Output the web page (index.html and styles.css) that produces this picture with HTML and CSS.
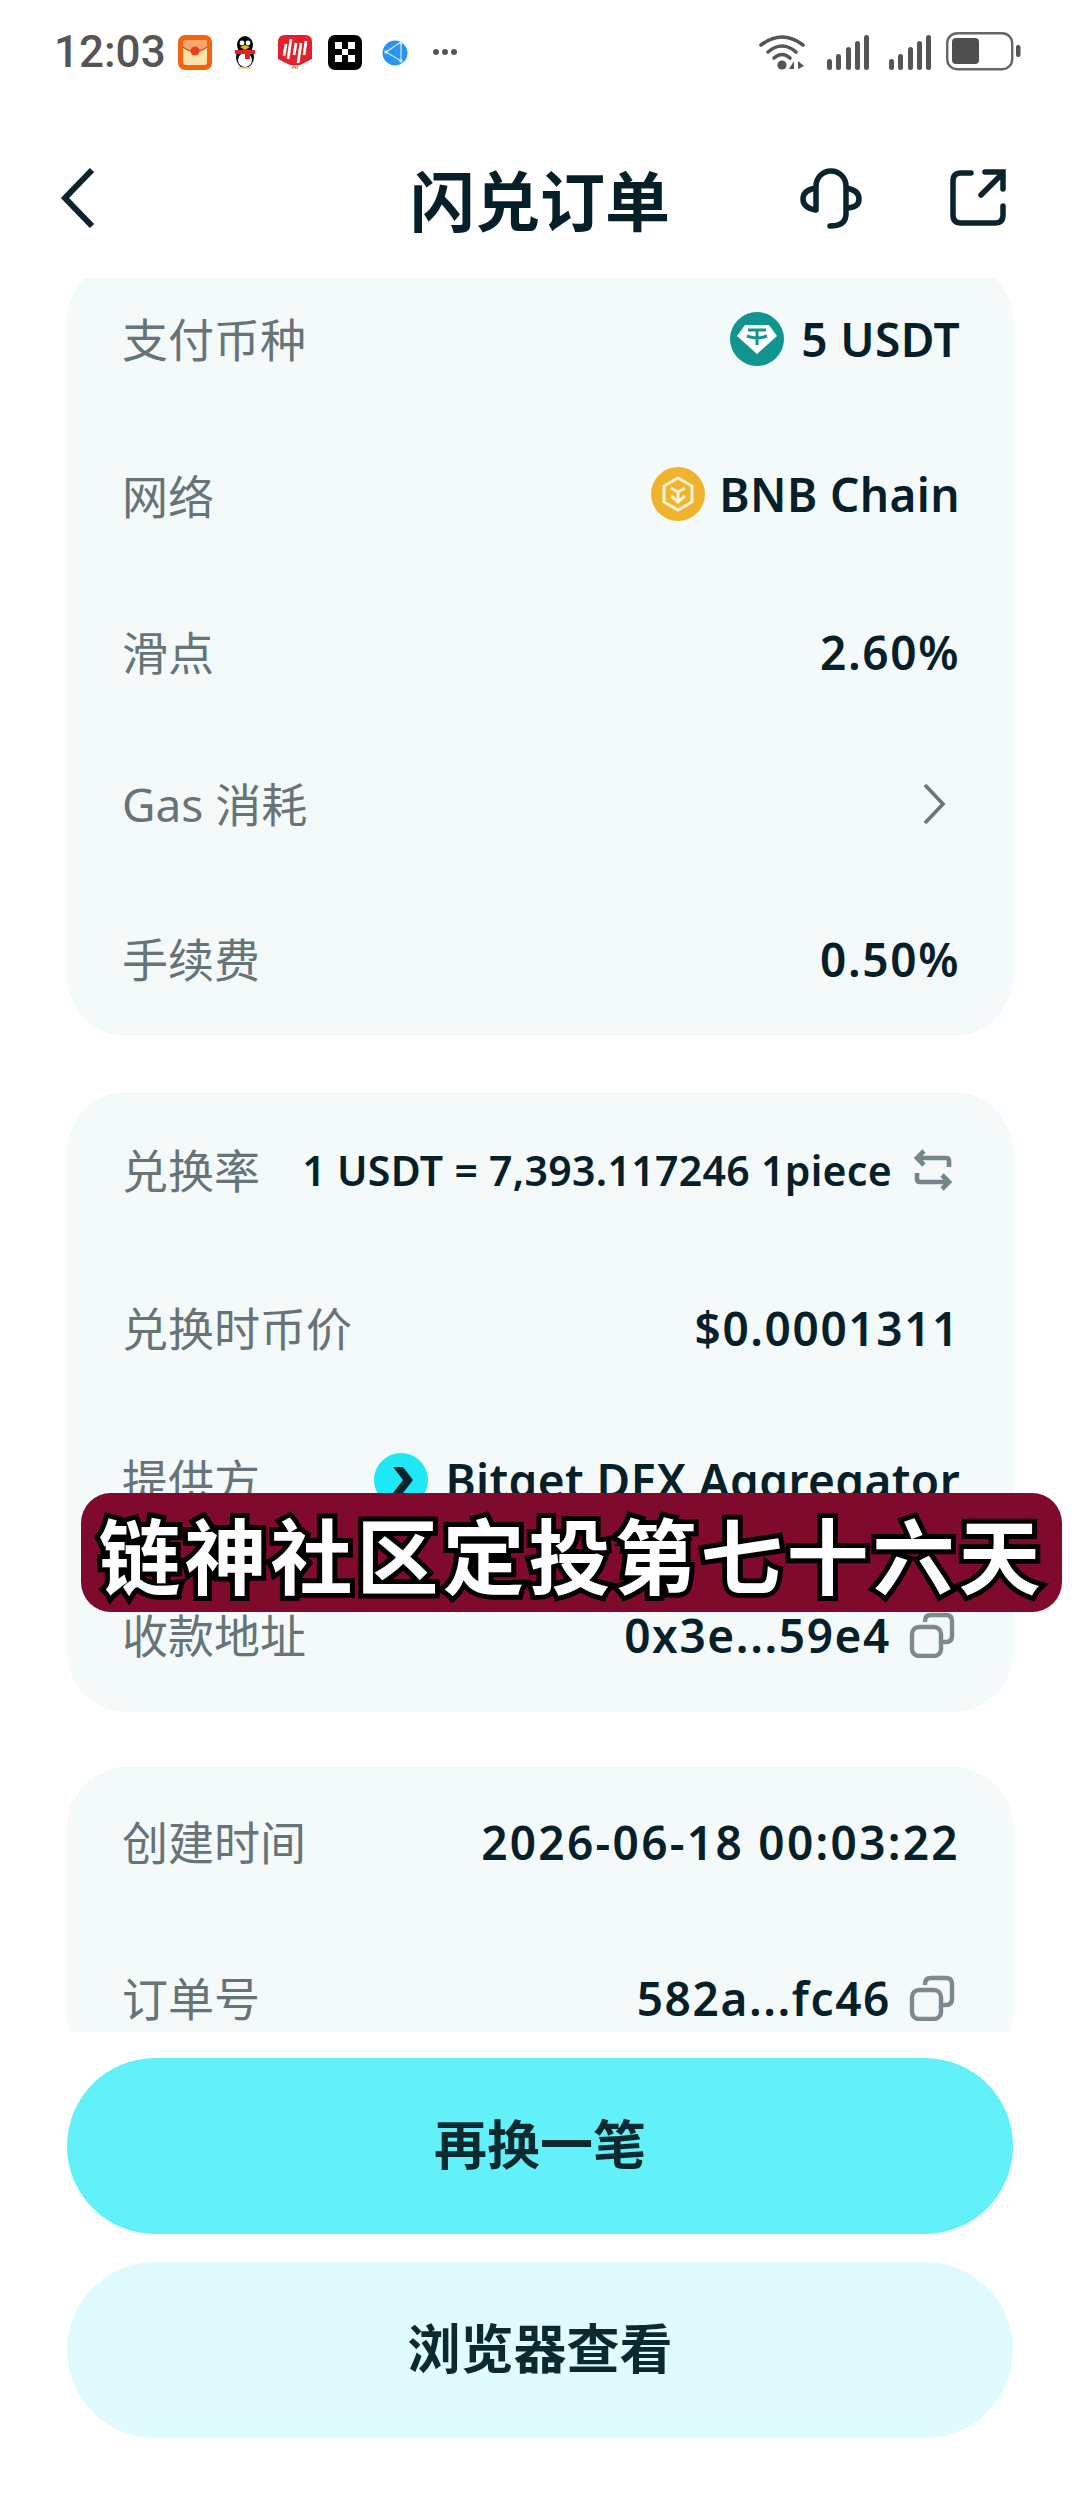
FILE: index.html
```html
<!DOCTYPE html>
<html>
<head>
  <meta charset="utf-8">
  <title>闪兑订单</title>
  <link rel="stylesheet" href="styles.css">
</head>
<body>
  <div class="page">
    <div class="status">
      <div class="status-left">
        <span class="time">12:03</span>
        <div class="notify">
          <svg viewBox="0 0 34 34"><rect width="34" height="35" rx="7" fill="#f2640f"/><rect x="5" y="5" width="24" height="25" rx="3" fill="#fde3a8"/><path d="M5 12Q17 21 29 12V8Q29 5 26 5H8Q5 5 5 8Z" fill="#f9a66a"/><path d="M5 12Q17 21 29 12" stroke="#d9481c" stroke-width="1.2" fill="none"/><circle cx="17" cy="16" r="4.5" fill="#e8401c"/></svg>
          <svg viewBox="0 0 34 34"><ellipse cx="17" cy="22" rx="9" ry="11" fill="#000"/><ellipse cx="17" cy="10" rx="8" ry="9" fill="#000"/><ellipse cx="17" cy="25" rx="7" ry="7" fill="#fff"/><circle cx="14" cy="8" r="2.4" fill="#fff"/><circle cx="20" cy="8" r="2.4" fill="#fff"/><path d="M12 12 17 10 22 12 17 15Z" fill="#f5b400"/><path d="M7 15H27V19H22V24H17V19H7Z" fill="#e2231a"/><path d="M10 33H24" stroke="#ecd77a" stroke-width="1.5"/></svg>
          <svg viewBox="0 0 34 34"><path d="M7 0H27Q34 0 34 7V24L22 30H12L0 24V7Q0 0 7 0Z" fill="#e5202b"/><path d="M8 9 6 21M13 4 10 24M18 8 16 20M23 8 20 28M28 6 26 20" stroke="#fff" stroke-width="2.8" fill="none"/><text x="17" y="34" class="ai">AI</text></svg>
          <svg viewBox="0 0 34 34"><rect width="34" height="35" rx="7" fill="#000"/><path d="M7 7H14V14H7ZM20 7H27V14H20ZM14 14H20V20H14ZM7 20H14V27H7ZM20 20H27V27H20Z" fill="#fff"/></svg>
          <svg viewBox="0 0 34 34"><circle cx="17" cy="18" r="12.5" fill="#2b95ee"/><path d="M23 7 8 17 23 26 23 7" stroke="#cfe9ff" stroke-width="1.2" fill="none"/><circle cx="8" cy="17" r="1.7" fill="#cfe9ff"/><circle cx="23" cy="26" r="1.7" fill="#cfe9ff"/><circle cx="23" cy="8" r="1.7" fill="#cfe9ff"/></svg>
          <svg viewBox="0 0 34 34"><circle cx="8" cy="17" r="3" fill="#555"/><circle cx="17" cy="17" r="3" fill="#555"/><circle cx="26" cy="17" r="3" fill="#555"/></svg>
        </div>
      </div>
      <div class="status-right">
        <svg class="ic-wifi" viewBox="0 0 46 38"><path d="M2 12Q23 -4 44 12" stroke="#555" stroke-width="3.6" fill="none" stroke-linecap="round"/><path d="M9 19Q23 7 37 19" stroke="#555" stroke-width="3.6" fill="none" stroke-linecap="round"/><path d="M15 25Q23 18 31 25" stroke="#555" stroke-width="3.6" fill="none" stroke-linecap="round"/><circle cx="23" cy="32" r="4.6" fill="#555"/><path d="M35 28V36H30ZM39 28V36L45 33Z" fill="#555"/></svg>
        <svg class="ic-signal" viewBox="0 0 44 36"><rect x="1" y="25" width="5" height="11" rx="2.5" fill="#555"/><rect x="10" y="20" width="5" height="16" rx="2.5" fill="#555"/><rect x="20" y="13" width="5" height="23" rx="2.5" fill="#555"/><rect x="29" y="7" width="5" height="29" rx="2.5" fill="#555"/><rect x="38" y="1" width="5" height="35" rx="2.5" fill="#555"/></svg>
        <svg class="ic-signal" viewBox="0 0 44 36"><rect x="1" y="25" width="5" height="11" rx="2.5" fill="#555"/><rect x="10" y="20" width="5" height="16" rx="2.5" fill="#555"/><rect x="20" y="13" width="5" height="23" rx="2.5" fill="#555"/><rect x="29" y="7" width="5" height="29" rx="2.5" fill="#555"/><rect x="38" y="1" width="5" height="35" rx="2.5" fill="#555"/></svg>
        <svg class="ic-batt" viewBox="0 0 76 40"><rect x="1.2" y="1.2" width="65" height="36" rx="10" stroke="#666" stroke-width="2.4" fill="none"/><rect x="6" y="6" width="27" height="26" rx="4" fill="#4f4f4f"/><rect x="70" y="13" width="4.5" height="12" rx="2" fill="#555"/></svg>
      </div>
    </div>

    <div class="header">
      <svg class="ic-back" viewBox="0 0 40 64"><path d="M35 4 8 32 35 60" stroke="#0a232c" stroke-width="6" fill="none"/></svg>
      <h1 class="title">闪兑订单</h1>
      <div class="header-right">
        <svg class="ic-head" viewBox="0 0 62 64"><path d="M16 44V20A15 15 0 0 1 46 20V48Q46 60 30 60" stroke="#0a232c" stroke-width="5.5" fill="none" stroke-linecap="round"/><path d="M16 22Q3 24 3 33T16 44" stroke="#0a232c" stroke-width="5.5" fill="none"/><path d="M46 22Q59 24 59 33T46 42" stroke="#0a232c" stroke-width="5.5" fill="none"/></svg>
        <svg class="ic-share" viewBox="0 0 60 60"><path d="M22 5H12Q4 5 4 13V47Q4 55 12 55H46Q54 55 54 47V38" stroke="#0a232c" stroke-width="5.5" fill="none" stroke-linecap="round"/><path d="M32 27 53 6M36 4H54V21" stroke="#0a232c" stroke-width="5.5" fill="none" stroke-linecap="round"/></svg>
      </div>
    </div>

    <div class="scroll">
      <div class="card">
        <div class="row">
          <span class="label">支付币种</span>
          <span class="value">
            <svg class="coin" viewBox="0 0 54 54"><circle cx="27" cy="27" r="27" fill="#109590"/><path d="M15 13H39L47 24 27 42 7 24Z" fill="#fff"/><path d="M18 18H36M27 18V33M17 24Q27 28 37 24" stroke="#109590" stroke-width="3" fill="none"/></svg>
            <span>5 USDT</span>
          </span>
        </div>
        <div class="row">
          <span class="label low">网络</span>
          <span class="value">
            <svg class="coin tight" viewBox="0 0 54 54"><circle cx="27" cy="27" r="27" fill="#f0b32e"/><path d="M27 11 41 19V35L27 43 13 35V19Z" stroke="#fff3d4" stroke-width="3" fill="none"/><path d="M20 21 27 25 34 21M27 25V33M20 29 27 35 34 29" stroke="#fff3d4" stroke-width="3" fill="none"/></svg>
            <span>BNB Chain</span>
          </span>
        </div>
        <div class="row nudge">
          <span class="label">滑点</span>
          <span class="value num">2.60%</span>
        </div>
        <div class="row">
          <span class="label">Gas 消耗</span>
          <svg class="ic-arrow" viewBox="0 0 26 44"><path d="M4 3 22 22 4 41" stroke="#67787c" stroke-width="3.6" fill="none"/></svg>
        </div>
        <div class="row">
          <span class="label">手续费</span>
          <span class="value num">0.50%</span>
        </div>
      </div>

      <div class="card">
        <div class="row">
          <span class="label">兑换率</span>
          <span class="value rate">
            <span>1 USDT = 7,393.117246 1piece</span>
            <svg class="ic-swap" viewBox="0 0 44 44"><path d="M38 19V13Q38 10 35 10H7M13 3 6 10 13 17" stroke="#75868a" stroke-width="4.6" fill="none"/><path d="M6 25V31Q6 34 9 34H37M31 27 38 34 31 41" stroke="#75868a" stroke-width="4.6" fill="none"/></svg>
          </span>
        </div>
        <div class="row nudge">
          <span class="label">兑换时币价</span>
          <span class="value num">$0.0001311</span>
        </div>
        <div class="row">
          <span class="label">提供方</span>
          <span class="value">
            <svg class="coin" viewBox="0 0 54 54"><circle cx="27" cy="27" r="27" fill="#1fe8f6"/><path d="M19 14H29L39 27 29 40H19L29 27Z" fill="#0a232c"/></svg>
            <span>Bitget DEX Aggregator</span>
          </span>
        </div>
        <div class="row">
          <span class="label">收款地址</span>
          <span class="value">
            <span class="num">0x3e...59e4</span>
            <svg class="ic-copy" viewBox="0 0 46 46"><rect x="3" y="15" width="29" height="29" rx="7" stroke="#7d8a8d" stroke-width="4.4" fill="none"/><path d="M16 10V9Q16 3 22 3H37Q43 3 43 9V24Q43 30 37 30H34" stroke="#7d8a8d" stroke-width="4.4" fill="none"/></svg>
          </span>
        </div>
      </div>

      <div class="card third">
        <div class="row">
          <span class="label">创建时间</span>
          <span class="value num wide">2026-06-18 00:03:22</span>
        </div>
        <div class="row">
          <span class="label">订单号</span>
          <span class="value">
            <span class="num">582a...fc46</span>
            <svg class="ic-copy" viewBox="0 0 46 46"><rect x="3" y="15" width="29" height="29" rx="7" stroke="#7d8a8d" stroke-width="4.4" fill="none"/><path d="M16 10V9Q16 3 22 3H37Q43 3 43 9V24Q43 30 37 30H34" stroke="#7d8a8d" stroke-width="4.4" fill="none"/></svg>
          </span>
        </div>
      </div>
    </div>

    <div class="footer">
      <button class="btn primary">再换一笔</button>
      <button class="btn light">浏览器查看</button>
    </div>

    <div class="caption">链神社区定投第七十六天</div>
  </div>
</body>
</html>
```

FILE: styles.css
```css
*{margin: 0;padding: 0;box-sizing: border-box;}
html, body{
  width: 1080px;
  height: 2504px;
  overflow: hidden;
  background-color: #ffffff;
  color: #06202a;
  font-family: "Noto Sans","Noto Sans CJK SC",sans-serif;
}
.page{
  position: relative;
  width: 1080px;
  height: 2504px;
  display: flex;
  flex-direction: column;
}
.status{
  height: 104px;
  padding: 0 58px 0 54px;
  display: flex;
  align-items: center;
  justify-content: space-between;
}
.status-left, .status-right{
  display: flex;
  align-items: center;
}
.time{
  font-family: Roboto,sans-serif;
  font-size: 44px;
  font-weight: 500;
  color: #555555;
  margin-right: 12px;
}
.notify{
  display: flex;
  gap: 16px;
}
.notify svg{
  width: 34px;
  height: 34px;
  overflow: visible;
}
.ai{
  font-family: Roboto,sans-serif;
  font-size: 7px;
  fill: #e5202b;
  text-anchor: middle;
}
.ic-wifi{width: 46px;height: 38px;margin-right: 21px;}
.ic-signal{width: 44px;height: 36px;margin-right: 18px;}
.ic-signal + .ic-batt{margin-left: -4px;}
.ic-batt{width: 76px;height: 40px;}

.header{
  height: 174px;
  padding: 14px 71px 0 57px;
  display: flex;
  align-items: center;
  justify-content: space-between;
  position: relative;
}
.ic-back{width: 40px;height: 64px;}
.title{
  position: absolute;
  left: 0;
  right: 0;
  text-align: center;
  font-size: 65px;
  font-weight: 700;
}
.header-right{
  display: flex;
  align-items: center;
  gap: 87px;
}
.ic-head{width: 62px;height: 64px;}
.ic-share{width: 60px;height: 60px;}

.scroll{
  height: 1754px;
  padding: 0 67px;
  overflow: hidden;
}
.card{
  margin-top: 56px;
  padding: 0 53px 0 55px;
  background-color: #f4f9fa;
  border-radius: 60px;
}
.card:first-child{
  margin-top: -17px;
}
.card.third{
  margin-top: 55px;
}
.third .row:first-child{
  height: 153px;
  padding-bottom: 4px;
}
.row{
  height: 155px;
  display: flex;
  align-items: center;
  justify-content: space-between;
}
.row.nudge{
  padding-top: 6px;
}
.label{
  padding-bottom: 4px;
  font-size: 46px;
  color: #667477;
}
.label.low{
  padding-bottom: 0;
}
.value{
  display: flex;
  align-items: center;
  font-size: 46px;
  font-weight: 600;
  letter-spacing: 0.4px;
  white-space: nowrap;
}
.num{
  letter-spacing: 1.6px;
}
.wide{
  letter-spacing: 2.3px;
}
.rate{
  font-size: 41px;
  letter-spacing: 0.3px;
}
.coin{
  width: 54px;
  height: 54px;
  margin-right: 17px;
}
.coin.tight{
  margin-right: 14px;
}
.ic-arrow{width: 26px;height: 44px;margin-right: 13px;}
.ic-swap{width: 44px;height: 44px;margin-left: 19px;margin-right: 5px;}
.ic-copy{width: 46px;height: 46px;margin-left: 18px;margin-right: 5px;}

.footer{
  padding: 26px 67px 0;
  display: flex;
  flex-direction: column;
  gap: 28px;
}
.btn{
  height: 176px;
  padding-bottom: 8px;
  border: none;
  border-radius: 88px;
  font-family: inherit;
  font-size: 53px;
  font-weight: 700;
  color: #0a2a30;
}
.primary{background-color: #62f0f9;}
.light{background-color: #e0fbfd;}

.caption{
  position: absolute;
  left: 81px;
  top: 1493px;
  width: 981px;
  height: 119px;
  background-color: #7f0a2c;
  border-radius: 30px;
  display: flex;
  align-items: center;
  justify-content: center;
  font-family: "Noto Sans CJK SC",sans-serif;
  font-size: 82px;
  font-weight: 700;
  letter-spacing: 4px;
  color: #ffffff;
  -webkit-text-stroke: 10px #000000;
  paint-order: stroke fill;
  white-space: nowrap;
}
```
